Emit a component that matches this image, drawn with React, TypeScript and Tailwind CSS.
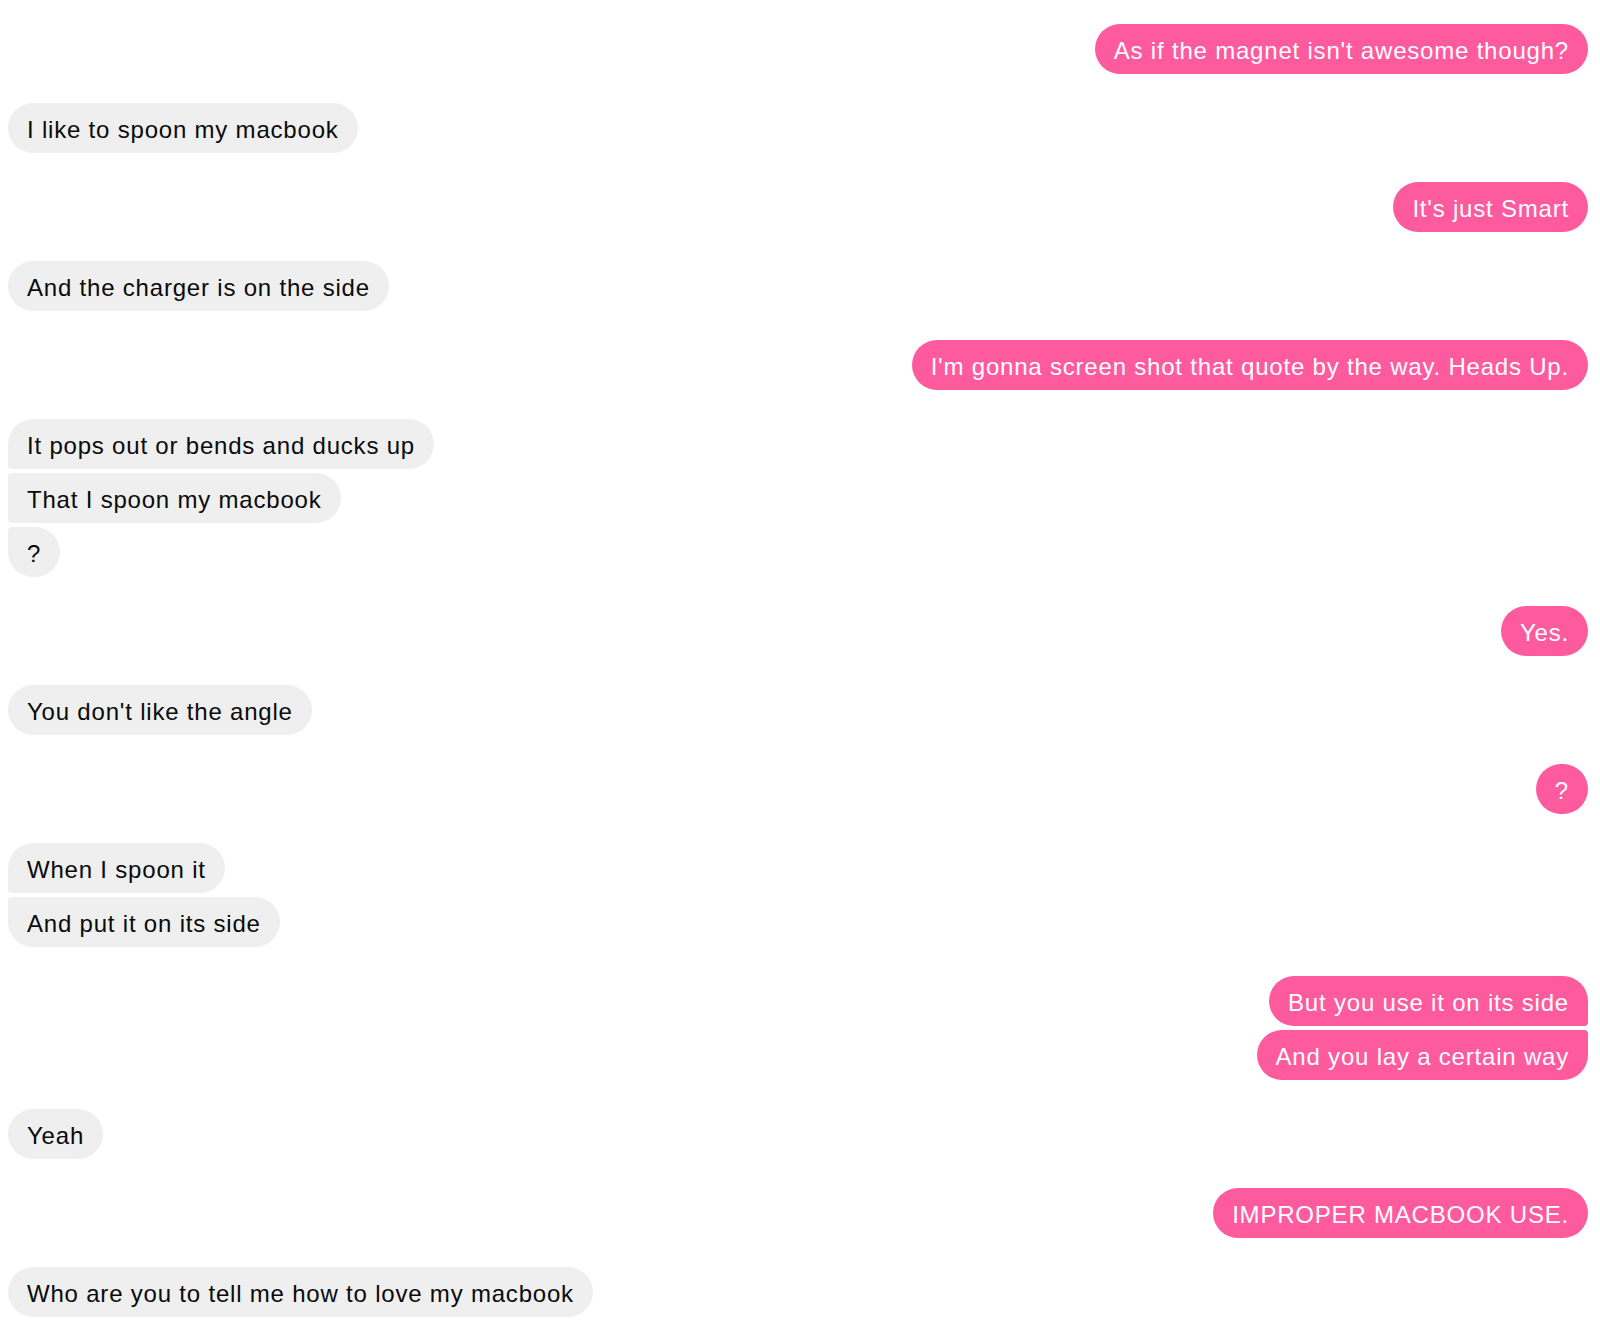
import React from "react";

type Group = { me: boolean; lines: string[] };

const groups: Group[] = [
  { me: true, lines: ["As if the magnet isn't awesome though?"] },
  { me: false, lines: ["I like to spoon my macbook"] },
  { me: true, lines: ["It's just Smart"] },
  { me: false, lines: ["And the charger is on the side"] },
  { me: true, lines: ["I'm gonna screen shot that quote by the way. Heads Up."] },
  { me: false, lines: ["It pops out or bends and ducks up", "That I spoon my macbook", "?"] },
  { me: true, lines: ["Yes."] },
  { me: false, lines: ["You don't like the angle"] },
  { me: true, lines: ["?"] },
  { me: false, lines: ["When I spoon it", "And put it on its side"] },
  { me: true, lines: ["But you use it on its side", "And you lay a certain way"] },
  { me: false, lines: ["Yeah"] },
  { me: true, lines: ["IMPROPER MACBOOK USE."] },
  { me: false, lines: ["Who are you to tell me how to love my macbook"] },
];

function corners(me: boolean, idx: number, total: number) {
  if (total === 1) return "rounded-[25px]";
  const first = idx === 0;
  const last = idx === total - 1;
  if (me) {
    if (first) return "rounded-[25px] rounded-br-[4px]";
    if (last) return "rounded-[25px] rounded-tr-[4px]";
    return "rounded-[25px] rounded-tr-[4px] rounded-br-[4px]";
  }
  if (first) return "rounded-[25px] rounded-bl-[4px]";
  if (last) return "rounded-[25px] rounded-tl-[4px]";
  return "rounded-[25px] rounded-tl-[4px] rounded-bl-[4px]";
}

export default function App() {
  return (
    <div
      className="min-h-[1329px] w-full bg-white pl-2 pr-3 pt-6 pb-3 flex flex-col gap-[29px]"
      style={{ fontFamily: "'Liberation Sans', Arial, sans-serif" }}
    >
      {groups.map((g, gi) => (
        <div key={gi} className={`flex flex-col gap-1 ${g.me ? "items-end" : "items-start"}`}>
          {g.lines.map((line, li) => (
            <div
              key={li}
              className={`h-[50px] flex items-center px-[19px] pt-[4px] text-[24px] leading-[28px] tracking-[0.8px] whitespace-nowrap ${corners(
                g.me,
                li,
                g.lines.length
              )} ${g.me ? "bg-[#fe5a9e] text-white" : "bg-[#efefef] text-[#0a0a0a]"}`}
            >
              {line}
            </div>
          ))}
        </div>
      ))}
    </div>
  );
}
